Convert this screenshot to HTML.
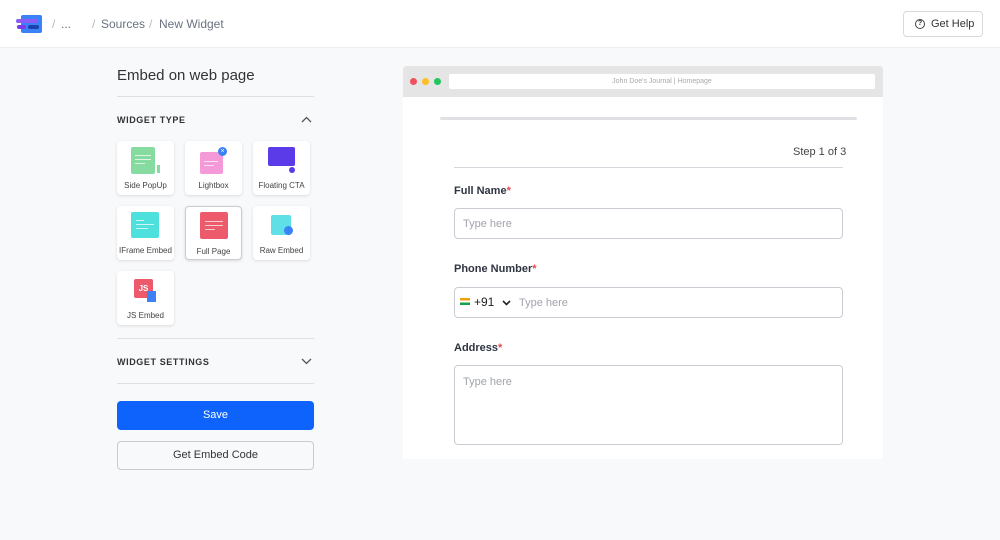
<!DOCTYPE html>
<html><head><style>
*{box-sizing:border-box;margin:0;padding:0}
body{width:1000px;height:540px;background:#f8f9fb;font-family:"Liberation Sans",sans-serif;color:#2e3440;position:relative;overflow:hidden}
.hdr{position:absolute;left:0;top:0;width:1000px;height:48px;background:#fff;border-bottom:1px solid #eceef2}
.abs{position:absolute}
.crumb{font-size:12px;color:#6b7280}
.card{position:absolute;width:57px;height:54px;background:#fff;border-radius:4px;box-shadow:0 1px 3px rgba(0,0,0,.12);font-size:8px;color:#444;text-align:center}
.card span{position:absolute;left:0;right:0;top:40px}
.ln{position:absolute;height:1px;background:rgba(255,255,255,.7)}
.inp{position:absolute;left:454px;width:389px;border:1px solid #c9ccd3;border-radius:4px;background:#fff;font-size:11px;color:#a0a4ab;padding-left:8px}
.lbl{position:absolute;left:454px;font-size:11px;font-weight:bold;color:#2e3440}
.lbl b{color:#e5484d}
</style></head><body>
<div class="hdr">
 <div class="abs" style="left:21px;top:15px;width:21px;height:18px;background:#3b82f6;border-radius:2px"></div>
 <div class="abs" style="left:16px;top:19px;width:22px;height:4px;background:#8b5cf6;border-radius:2px"></div>
 <div class="abs" style="left:28px;top:25px;width:11px;height:4px;background:#1e40af;border-radius:2px"></div>
 <div class="abs" style="left:17px;top:25px;width:9px;height:4px;background:#7c3aed;border-radius:2px"></div>
 <div class="abs crumb" style="left:52px;top:17px;color:#bbb">/</div>
 <div class="abs crumb" style="left:61px;top:17px">...</div>
 <div class="abs crumb" style="left:92px;top:17px;color:#bbb">/</div>
 <div class="abs crumb" style="left:101px;top:17px">Sources</div>
 <div class="abs crumb" style="left:149px;top:17px;color:#bbb">/</div>
 <div class="abs crumb" style="left:159px;top:17px">New Widget</div>
 <div class="abs" style="left:903px;top:11px;width:80px;height:26px;border:1px solid #d6d9de;border-radius:4px;font-size:11px;color:#333;padding:6px 0 0 27px">Get Help</div>
 <div class="abs" style="left:915px;top:19px;width:10px;height:10px;border:1.3px solid #444;border-radius:50%;font-size:7px;text-align:center;line-height:8px;font-weight:bold">?</div>
</div>
<div class="abs" style="left:117px;top:67px;font-size:15px;color:#333">Embed on web page</div>
<div class="abs" style="left:117px;top:96px;width:197px;height:1px;background:#dcdfe4"></div>
<div class="abs" style="left:117px;top:115px;font-size:9px;font-weight:bold;letter-spacing:.6px;color:#333">WIDGET TYPE</div>
<svg class="abs" style="left:301px;top:116px" width="11" height="7"><path d="M1 6L5.5 1.5L10 6" stroke="#555" fill="none" stroke-width="1.3"/></svg>
<div class="card" style="left:117px;top:141px"><div class="abs" style="left:14px;top:6px;width:24px;height:27px;background:#86dca0;border-radius:2px"><div class="ln" style="left:4px;top:8px;width:16px"></div><div class="ln" style="left:4px;top:12px;width:16px"></div><div class="ln" style="left:4px;top:16px;width:10px"></div></div><div class="abs" style="left:40px;top:24px;width:3px;height:8px;background:#86dca0"></div><span>Side PopUp</span></div>
<div class="card" style="left:185px;top:141px"><div class="abs" style="left:15px;top:11px;width:23px;height:22px;background:#f49ad9;border-radius:2px"><div class="ln" style="left:4px;top:9px;width:14px"></div><div class="ln" style="left:4px;top:13px;width:10px"></div></div><div class="abs" style="left:33px;top:6px;width:9px;height:9px;background:#3b82f6;border-radius:50%;color:#fff;font-size:7px;line-height:9px">×</div><span>Lightbox</span></div>
<div class="card" style="left:253px;top:141px"><div class="abs" style="left:15px;top:6px;width:27px;height:19px;background:#5b3be8;border-radius:2px"></div><div class="abs" style="left:36px;top:26px;width:6px;height:6px;background:#5b3be8;border-radius:50%"></div><span>Floating CTA</span></div>
<div class="card" style="left:117px;top:206px"><div class="abs" style="left:14px;top:6px;width:28px;height:26px;background:#4ee0dc;border-radius:2px"><div class="ln" style="left:5px;top:8px;width:8px"></div><div class="ln" style="left:5px;top:12px;width:18px"></div><div class="ln" style="left:5px;top:16px;width:12px"></div></div><span>IFrame Embed</span></div>
<div class="card" style="left:185px;top:206px;border:1px solid #ccc"><div class="abs" style="left:14px;top:5px;width:28px;height:27px;background:#ec5a6c;border-radius:2px"><div class="ln" style="left:5px;top:9px;width:18px"></div><div class="ln" style="left:5px;top:13px;width:18px"></div><div class="ln" style="left:5px;top:17px;width:10px"></div></div><span>Full Page</span></div>
<div class="card" style="left:253px;top:206px"><div class="abs" style="left:18px;top:9px;width:20px;height:20px;background:#5fe0e6;border-radius:2px"></div><div class="abs" style="left:31px;top:20px;width:9px;height:9px;background:#3b82f6;border-radius:50%"></div><span>Raw Embed</span></div>
<div class="card" style="left:117px;top:271px"><div class="abs" style="left:17px;top:8px;width:19px;height:19px;background:#ec5a6c;border-radius:2px;color:#fff;font-size:8px;font-weight:bold;line-height:20px">JS</div><div class="abs" style="left:30px;top:20px;width:9px;height:11px;background:#3b82f6"></div><span>JS Embed</span></div>
<div class="abs" style="left:117px;top:338px;width:197px;height:1px;background:#dcdfe4"></div>
<div class="abs" style="left:117px;top:357px;font-size:9px;font-weight:bold;letter-spacing:.6px;color:#333">WIDGET SETTINGS</div>
<svg class="abs" style="left:301px;top:358px" width="11" height="7"><path d="M1 1L5.5 5.5L10 1" stroke="#555" fill="none" stroke-width="1.3"/></svg>
<div class="abs" style="left:117px;top:383px;width:197px;height:1px;background:#dcdfe4"></div>
<div class="abs" style="left:117px;top:401px;width:197px;height:29px;background:#0d63fb;border-radius:4px;color:#fff;font-size:11px;text-align:center;line-height:29px">Save</div>
<div class="abs" style="left:117px;top:441px;width:197px;height:29px;background:#f8f9fb;border:1px solid #c8cbd0;border-radius:4px;color:#333;font-size:11px;text-align:center;line-height:27px">Get Embed Code</div>
<div class="abs" style="left:403px;top:66px;width:480px;height:393px;background:#fff"></div>
<div class="abs" style="left:403px;top:66px;width:480px;height:31px;background:#e5e5e5;border-radius:3px 3px 0 0"></div>
<div class="abs" style="left:410px;top:78px;width:7px;height:7px;border-radius:50%;background:#ef5160"></div>
<div class="abs" style="left:422px;top:78px;width:7px;height:7px;border-radius:50%;background:#fbbf24"></div>
<div class="abs" style="left:434px;top:78px;width:7px;height:7px;border-radius:50%;background:#22c55e"></div>
<div class="abs" style="left:449px;top:74px;width:426px;height:15px;background:#fff;border-radius:2px;font-size:7px;color:#aaa;text-align:center;line-height:15px">John Doe's Journal | Homepage</div>
<div class="abs" style="left:440px;top:117px;width:417px;height:3px;background:#e0e1e5;border-radius:2px"></div>
<div class="abs" style="left:793px;top:146px;font-size:11px;color:#444">Step 1 of 3</div>
<div class="abs" style="left:454px;top:167px;width:389px;height:1px;background:#d6d8dd"></div>
<div class="lbl" style="top:185px">Full Name<b>*</b></div>
<div class="inp" style="top:208px;height:31px;line-height:30px">Type here</div>
<div class="lbl" style="top:263px">Phone Number<b>*</b></div>
<div class="inp" style="top:287px;height:31px;line-height:30px;padding-left:64px">Type here</div>
<div class="abs" style="left:460px;top:298px;width:10px;height:7px;background:linear-gradient(#f59e0b 33%,#fff 33% 66%,#16a34a 66%)"></div>
<div class="abs" style="left:474px;top:295px;font-size:12px;color:#222">+91</div>
<svg class="abs" style="left:502px;top:300px" width="9" height="6"><path d="M1 1L4.5 4.5L8 1" stroke="#222" fill="none" stroke-width="1.6"/></svg>
<div class="lbl" style="top:342px">Address<b>*</b></div>
<div class="inp" style="top:365px;height:80px;padding-top:10px">Type here</div>
</body></html>
